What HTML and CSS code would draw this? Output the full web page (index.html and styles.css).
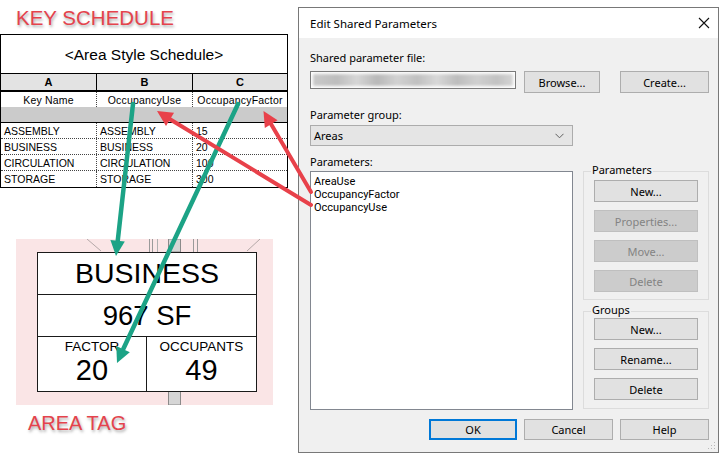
FILE: index.html
```html
<!DOCTYPE html>
<html>
<head>
<meta charset="utf-8">
<link rel="stylesheet" href="styles.css">
</head>
<body>
<div class="page">
  <div class="left">
    <div class="red-label key">KEY SCHEDULE</div>
    <div class="sched">
      <div class="s-title">&lt;Area Style Schedule&gt;</div>
      <div class="s-row s-hdr"><div>A</div><div>B</div><div>C</div></div>
      <div class="s-row s-names"><div>Key Name</div><div>OccupancyUse</div><div>OccupancyFactor</div></div>
      <div class="s-row s-gray"><div></div><div></div><div></div></div>
      <div class="s-row s-data"><div>ASSEMBLY</div><div>ASSEMBLY</div><div>15</div></div>
      <div class="s-row s-data"><div>BUSINESS</div><div>BUSINESS</div><div>20</div></div>
      <div class="s-row s-data"><div>CIRCULATION</div><div>CIRCULATION</div><div>100</div></div>
      <div class="s-row s-data last"><div>STORAGE</div><div>STORAGE</div><div>300</div></div>
    </div>
    <div class="tag-zone">
      <svg class="plan" width="257" height="166" viewBox="0 0 257 166">
        <line x1="71" y1="0" x2="85" y2="12" stroke="#b4a8a8" stroke-width="1"/>
        <line x1="244" y1="0" x2="231" y2="12" stroke="#b4a8a8" stroke-width="1"/>
        <line x1="133.5" y1="0" x2="133.5" y2="13" stroke="#9a9a9a"/>
        <line x1="136.5" y1="0" x2="136.5" y2="13" stroke="#9a9a9a"/>
        <line x1="141.5" y1="0" x2="141.5" y2="13" stroke="#b0b0b0"/>
        <rect x="152.5" y="0" width="12" height="13" fill="#d6d6d6" stroke="#8a8a8a"/>
        <line x1="177.5" y1="0" x2="177.5" y2="13" stroke="#9a9a9a"/>
        <line x1="181.5" y1="0" x2="181.5" y2="13" stroke="#9a9a9a"/>
        <rect x="152.5" y="152" width="12" height="14" fill="#d6d6d6" stroke="#8a8a8a"/>
      </svg>
      <div class="tag">
        <div class="tag-row tag-name">BUSINESS</div>
        <div class="tag-row tag-size">967 SF</div>
        <div class="tag-bottom">
          <div class="tag-cell"><span class="t-small">FACTOR</span><span class="t-big">20</span></div>
          <div class="tag-cell"><span class="t-small">OCCUPANTS</span><span class="t-big">49</span></div>
        </div>
      </div>
    </div>
    <div class="red-label area">AREA TAG</div>
  </div>

  <div class="dialog">
    <div class="titlebar">
      <span class="title">Edit Shared Parameters</span>
      <svg class="close" width="12" height="12" viewBox="0 0 12 12"><path d="M1 1 L11 11 M11 1 L1 11" stroke="#111" stroke-width="1.1" fill="none"/></svg>
    </div>
    <div class="body">
      <div class="lbl lbl1">Shared parameter file:</div>
      <div class="file-row">
        <div class="field"><div class="blur"></div></div>
        <button class="btn browse">Browse...</button>
        <button class="btn create">Create...</button>
      </div>
      <div class="lbl lbl2">Parameter group:</div>
      <div class="combo"><span>Areas</span><svg width="9" height="6" viewBox="0 0 9 6"><path d="M0.5 0.8 L4.5 4.8 L8.5 0.8" stroke="#606060" fill="none" stroke-width="1"/></svg></div>
      <div class="lbl lbl3">Parameters:</div>
      <div class="main">
        <div class="list">
          <div class="item">AreaUse</div>
          <div class="item">OccupancyFactor</div>
          <div class="item">OccupancyUse</div>
        </div>
        <div class="side">
          <div class="group g1">
            <div class="legend">Parameters</div>
            <button class="btn gbtn first">New...</button>
            <button class="btn gbtn dis">Properties...</button>
            <button class="btn gbtn dis">Move...</button>
            <button class="btn gbtn dis">Delete</button>
          </div>
          <div class="group g2">
            <div class="legend">Groups</div>
            <button class="btn gbtn first">New...</button>
            <button class="btn gbtn">Rename...</button>
            <button class="btn gbtn">Delete</button>
          </div>
        </div>
      </div>
      <div class="foot">
        <button class="btn ok">OK</button>
        <button class="btn cancel">Cancel</button>
        <button class="btn help">Help</button>
      </div>
    </div>
    <svg class="grip" width="8" height="8" viewBox="0 0 8 8">
      <rect x="6" y="0" width="1" height="1" fill="#b8b8b8"/>
      <rect x="3" y="3" width="1" height="1" fill="#b8b8b8"/>
      <rect x="6" y="3" width="1" height="1" fill="#b8b8b8"/>
      <rect x="0" y="6" width="1" height="1" fill="#b8b8b8"/>
      <rect x="3" y="6" width="1" height="1" fill="#b8b8b8"/>
      <rect x="6" y="6" width="1" height="1" fill="#b8b8b8"/>
    </svg>
  </div>
</div>

<svg class="arrows" width="720" height="453" viewBox="0 0 720 453">
  <g stroke="#1ca386" stroke-width="4.5" stroke-linecap="round" fill="#1ca386">
    <line x1="133" y1="104" x2="117.6" y2="242"/>
    <polygon points="116,256 124.8,241.6 110.4,240" stroke="none"/>
    <line x1="238" y1="104" x2="123.5" y2="348.5"/>
    <polygon points="117,363 129.8,352.3 116.3,346" stroke="none"/>
  </g>
  <g stroke="#e8414a" stroke-width="4" stroke-linecap="round" fill="#e8414a">
    <line x1="311" y1="205" x2="170" y2="119.2"/>
    <polygon points="157,111 174,112.8 166,126" stroke="none"/>
    <line x1="311" y1="192" x2="271" y2="124.1"/>
    <polygon points="263.5,111 277.6,120.3 264.8,128" stroke="none"/>
  </g>
</svg>
</body>
</html>
```

FILE: styles.css
```css
* { box-sizing: border-box; }

body {
  margin: 0;
  width: 720px;
  height: 453px;
  overflow: hidden;
  background: #ffffff;
  position: relative;
  font-family: "Liberation Sans", Arial, sans-serif;
}

.page {
  display: flex;
  align-items: flex-start;
}

.left {
  width: 298px;
  flex: none;
}

.red-label {
  color: #e4434c;
  font-family: "Liberation Sans", Arial, sans-serif;
  text-shadow: 1px 2px 3px rgba(0, 0, 0, 0.35);
  line-height: 24px;
  height: 24px;
  white-space: nowrap;
}

.key {
  font-size: 20.5px;
  margin-top: 6px;
  padding-left: 16px;
}

.area {
  font-size: 20px;
  margin-top: 6px;
  padding-left: 28px;
}

/* schedule */
.sched {
  margin-top: 4px;
  width: 288px;
  border: 1px solid #000;
  font-size: 10.5px;
  color: #000;
}

.s-title {
  height: 39px;
  border-bottom: 1px solid #000;
  display: flex;
  align-items: center;
  justify-content: center;
  font-size: 15.5px;
  padding-top: 1px;
}

.s-row {
  display: grid;
  grid-template-columns: 96px 96px 1fr;
}

.s-hdr {
  height: 18px;
  background: #e3e3e3;
  border-bottom: 2px solid #000;
  font-weight: bold;
  font-size: 11px;
}

.s-hdr > div {
  display: flex;
  align-items: center;
  justify-content: center;
}

.s-hdr > div:not(:last-child) {
  border-right: 1px solid #000;
}

.s-names {
  height: 15px;
}

.s-names > div {
  display: flex;
  align-items: center;
  justify-content: center;
  letter-spacing: 0.2px;
}

.s-names > div:not(:last-child),
.s-data > div:not(:last-child) {
  border-right: 1px dotted #444;
}

.s-gray {
  height: 16px;
  background: #cbcbcb;
  border-bottom: 1px solid #000;
}

.s-data {
  height: 16px;
  border-bottom: 1px dotted #444;
}

.s-data.last {
  border-bottom: none;
}

.s-data > div {
  display: flex;
  align-items: center;
  padding-left: 3px;
  white-space: nowrap;
  overflow: hidden;
}

/* area tag */
.tag-zone {
  margin-top: 51px;
  margin-left: 16px;
  width: 257px;
  height: 166px;
  background: #fae5e6;
  position: relative;
  padding: 13px 0 0 21px;
}

.plan {
  position: absolute;
  left: 0;
  top: 0;
}

.tag {
  position: relative;
  width: 220px;
  height: 140px;
  border: 1px solid #1a1a1a;
  background: #ffffff;
  color: #000;
}

.tag-row {
  height: 42px;
  border-bottom: 1px solid #1a1a1a;
  display: flex;
  align-items: center;
  justify-content: center;
}

.tag-name {
  font-size: 28.5px;
}

.tag-size {
  font-size: 27.5px;
}

.tag-bottom {
  display: grid;
  grid-template-columns: 109px 1fr;
  height: 54px;
}

.tag-cell {
  display: flex;
  flex-direction: column;
  align-items: center;
  padding-top: 2px;
}

.tag-cell:first-child {
  border-right: 1px solid #1a1a1a;
}

.t-small {
  font-size: 13.5px;
  line-height: 16px;
}

.t-big {
  font-size: 29px;
  line-height: 30px;
}

/* dialog */
.dialog {
  margin-top: 7px;
  width: 421px;
  height: 446px;
  flex: none;
  border: 1px solid #787878;
  background: #f0f0f0;
  font-family: "Noto Sans", "Open Sans", sans-serif;
  font-size: 11px;
  color: #000;
  position: relative;
}

.titlebar {
  height: 30px;
  background: #ffffff;
  display: flex;
  align-items: center;
  justify-content: space-between;
  padding: 0 8px 0 11px;
}

.title {
  font-size: 11.5px;
}

.body {
  padding: 0 9px 0 11px;
}

.lbl {
  line-height: 15px;
  height: 15px;
  white-space: nowrap;
}

.lbl1 { margin-top: 12px; }
.lbl2 { margin-top: 14px; }
.lbl3 { margin-top: 8px; }

.file-row {
  display: flex;
  align-items: flex-start;
  margin-top: 6px;
}

.field {
  width: 206px;
  height: 18px;
  border: 1px solid #7a7a7a;
  background: #ffffff;
  padding: 2px 2px;
  overflow: hidden;
}

.blur {
  height: 12px;
  background: linear-gradient(90deg, #c9c9c9 0%, #bdbdbd 12%, #d6d6d6 22%, #b8b8b8 32%, #d2d2d2 42%, #c0c0c0 52%, #d8d8d8 62%, #bcbcbc 72%, #d0d0d0 82%, #c2c2c2 92%, #d4d4d4 100%);
  filter: blur(1.5px);
}

.btn {
  font-family: "Noto Sans", "Open Sans", sans-serif;
  font-size: 11px;
  color: #000;
  background: #e1e1e1;
  border: 1px solid #adadad;
  padding: 0;
  margin: 0;
  display: flex;
  align-items: center;
  justify-content: center;
  flex: none;
}

.browse {
  width: 76px;
  height: 22px;
  margin-left: 8px;
}

.create {
  width: 89px;
  height: 22px;
  margin-left: 20px;
}

.combo {
  margin-top: 3px;
  width: 263px;
  height: 21px;
  background: #e5e5e5;
  border: 1px solid #acacac;
  display: flex;
  align-items: center;
  justify-content: space-between;
  padding: 0 8px 0 3px;
}

.main {
  display: flex;
  margin-top: 2px;
  height: 239px;
}

.list {
  width: 263px;
  height: 239px;
  background: #ffffff;
  border: 1px solid #828790;
  padding: 3px 3px;
}

.item {
  font-family: Roboto, "Noto Sans", sans-serif;
  font-size: 11px;
  line-height: 13px;
  height: 13px;
  white-space: nowrap;
}

.side {
  width: 126px;
  margin-left: 10px;
}

.group {
  border: 1px solid #dcdcdc;
  padding: 0 0 0 10px;
}

.g1 {
  height: 129px;
}

.g2 {
  margin-top: 11px;
  height: 98px;
}

.legend {
  display: block;
  width: fit-content;
  height: 15px;
  margin: -10px 0 0 -3px;
  padding: 0 1px;
  line-height: 15px;
  background: #f0f0f0;
}

.gbtn {
  width: 104px;
  height: 22px;
  margin-top: 8px;
}

.g1 .gbtn.first { margin-top: 3px; }
.g2 .gbtn.first { margin-top: 1px; }

.gbtn.dis {
  background: #cccccc;
  border-color: #bfbfbf;
  color: #838383;
}

.foot {
  display: flex;
  justify-content: flex-end;
  gap: 7px;
  margin-top: 9px;
}

.foot .btn {
  height: 21px;
}

.ok {
  width: 88px;
  border: 2px solid #0078d7;
}

.cancel, .help {
  width: 89px;
}

.grip {
  position: absolute;
  right: 2px;
  bottom: 2px;
}

.arrows {
  position: absolute;
  left: 0;
  top: 0;
  pointer-events: none;
}
```
